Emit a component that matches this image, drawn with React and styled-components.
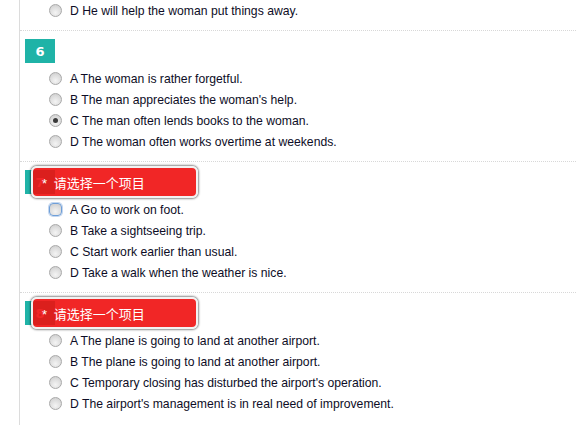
import React from "react";
import styled, { createGlobalStyle, css } from "styled-components";

const Global = createGlobalStyle`
  html, body { margin: 0; padding: 0; background: #fff; }
  body { font-family: "Liberation Sans", Arial, sans-serif; }
`;

const Page = styled.div`
  margin-left: 19px;
  border-left: 1px solid #dcdcdc;
  min-height: 425px;
`;

const Section = styled.div`
  position: relative;
  padding: ${(p) => (p.$partial ? "0 0 9px" : "8px 0 9px")};
  border-top: ${(p) => (p.$partial ? "none" : "1px dotted #d8d8d8")};
`;

const Badge = styled.div`
  margin-left: 5px;
  margin-bottom: 5px;
  width: 30px;
  height: 24px;
  background: #1fb3a7;
  color: #fff;
  font-family: "DejaVu Sans", Verdana, sans-serif;
  font-weight: bold;
  font-size: 13px;
  display: flex;
  align-items: center;
  justify-content: center;
`;

const Options = styled.div`
  padding-left: 29px;
  display: flex;
  flex-direction: column;
`;

const Row = styled.label`
  height: 21px;
  display: flex;
  align-items: center;
  gap: 8px;
  font-size: 12.2px;
  color: #0d0d26;
  white-space: nowrap;
`;

const Radio = styled.span`
  position: relative;
  width: 11px;
  height: 11px;
  border-radius: 50%;
  border: 1px solid #a9a9a9;
  background: radial-gradient(circle at 50% 70%, #f4f4f4 0%, #dedede 55%, #c9c9c9 100%);
  flex: none;
  ${(p) =>
    p.$focus &&
    css`
      border-color: #6f9fd8;
      box-shadow: 0 0 0 1px #c3d6ef;
      border-radius: 4px;
    `}
  ${(p) =>
    p.$checked &&
    css`
      &::after {
        content: "";
        position: absolute;
        left: 3px;
        top: 3px;
        width: 5px;
        height: 5px;
        border-radius: 50%;
        background: #3a3a3a;
      }
    `}
`;

const Tip = styled.div`
  position: absolute;
  left: 11px;
  top: 4px;
  width: 163px;
  height: 28px;
  box-sizing: content-box;
  border: 2px solid #f2f2f2;
  border-radius: 6px;
  box-shadow: 0 0 2px 1px rgba(0, 0, 0, 0.45);
  background: rgba(240, 14, 14, 0.9);
  color: #fff;
  display: flex;
  align-items: center;
  font-size: 13px;
  font-family: "Liberation Sans", "Noto Sans CJK SC", sans-serif;
`;

const TipText = styled.span`
  margin-left: 9px;
  word-spacing: 3px;
`;

const Opt = ({ text, checked, focus }) => (
  <Row>
    <Radio $checked={checked} $focus={focus} />
    <span>{text}</span>
  </Row>
);

const questions = [
  {
    n: 6,
    opts: [
      "A The woman is rather forgetful.",
      "B The man appreciates the woman's help.",
      "C The man often lends books to the woman.",
      "D The woman often works overtime at weekends.",
    ],
    checked: 2,
  },
  {
    n: 7,
    tip: true,
    focus: 0,
    opts: [
      "A Go to work on foot.",
      "B Take a sightseeing trip.",
      "C Start work earlier than usual.",
      "D Take a walk when the weather is nice.",
    ],
  },
  {
    n: 8,
    tip: true,
    opts: [
      "A The plane is going to land at another airport.",
      "B The plane is going to land at another airport.",
      "C Temporary closing has disturbed the airport's operation.",
      "D The airport's management is in real need of improvement.",
    ],
  },
];

export default function App() {
  return (
    <>
      <Global />
      <Page>
        <Section $partial>
          <Options>
            <Opt text="D He will help the woman put things away." />
          </Options>
        </Section>
        {questions.map((q) => (
          <Section key={q.n}>
            <Badge>{q.n}</Badge>
            {q.tip && (
              <Tip>
                <TipText>* 请选择一个项目</TipText>
              </Tip>
            )}
            <Options>
              {q.opts.map((o, i) => (
                <Opt key={i} text={o} checked={q.checked === i} focus={q.focus === i} />
              ))}
            </Options>
          </Section>
        ))}
      </Page>
    </>
  );
}
